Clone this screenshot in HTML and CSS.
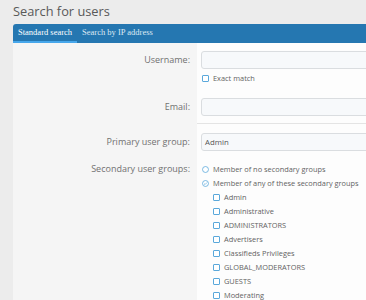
FILE: index.html
```html
<!DOCTYPE html>
<html lang="en">
<head>
    <meta charset="UTF-8">
    <meta name="viewport" content="width=device-width,initial-scale=1">
    <title>Search for users</title>
    <link rel="stylesheet" href="styles.css">
</head>
<body>
    <h1 class="page-title">Search for users</h1>
    <div class="block">
        <div class="tabs">
            <a class="tab is-active" href="#">Standard search</a>
            <a class="tab" href="#">Search by IP address</a>
        </div>
        <div class="block-body">
            <div class="section first">
                <div class="form-row">
                    <div class="row-label">Username:</div>
                    <div class="row-input">
                        <div class="input"></div>
                        <div class="option">
                            <span class="box"></span>Exact match
                        </div>
                    </div>
                </div>
                <div class="form-row">
                    <div class="row-label">Email:</div>
                    <div class="row-input">
                        <div class="input"></div>
                    </div>
                </div>
            </div>
            <div class="separator"></div>
            <div class="section">
                <div class="form-row">
                    <div class="row-label">Primary user group:</div>
                    <div class="row-input">
                        <div class="input">Admin</div>
                    </div>
                </div>
                <div class="form-row">
                    <div class="row-label short">Secondary user groups:</div>
                    <div class="row-input">
                        <div class="option">
                            <svg class="radio" viewBox="0 0 8 8"><circle cx="4" cy="4" r="3.4"/></svg>Member of no secondary groups
                        </div>
                        <div class="option">
                            <svg class="radio" viewBox="0 0 8 8"><circle cx="4" cy="4" r="3.4"/><polyline points="2.3,4.1 3.5,5.2 5.7,2.9"/></svg>Member of any of these secondary groups
                        </div>
                        <div class="group-list">
                            <div class="option"><span class="box"></span>Admin</div>
                            <div class="option"><span class="box"></span>Administrative</div>
                            <div class="option"><span class="box"></span>ADMINISTRATORS</div>
                            <div class="option"><span class="box"></span>Advertisers</div>
                            <div class="option"><span class="box"></span>Classifieds Privileges</div>
                            <div class="option"><span class="box"></span>GLOBAL_MODERATORS</div>
                            <div class="option"><span class="box"></span>GUESTS</div>
                            <div class="option"><span class="box"></span>Moderating</div>
                        </div>
                    </div>
                </div>
            </div>
        </div>
    </div>
</body>
</html>
```

FILE: styles.css
```css
html, body {
    overflow: hidden;
}
body {
    font-family: "Open Sans", Arial, sans-serif;
    background-color: #ececec;
    margin: 0;
    padding: 0 0 0 13px;
    color: #5a5a5a;
}
.page-title {
    font-size: 12.8px;
    font-weight: normal;
    line-height: 16px;
    margin: 3px 0 5px 0;
    color: #595959;
}
.block {
    width: 720px;
}
.tabs {
    display: flex;
    background: #2577b1;
    border-radius: 3px 3px 0 0;
}
.tab {
    font-family: "Liberation Serif", "Times New Roman", serif;
    font-size: 8.5px;
    line-height: 17px;
    height: 17px;
    padding: 0 5px;
    color: #dde9f3;
    text-decoration: none;
    border-bottom: 2px solid transparent;
}
.tab.is-active {
    color: #fff;
    border-bottom-color: #47a7eb;
}
.block-body {
    background: linear-gradient(to right, #f5f5f5 184px, #fdfdfd 184px);
}
.section {
    padding: 9px 0 0 0;
}
.section.first {
    padding: 8px 0 7px 0;
}
.separator {
    height: 1px;
    margin-left: 184px;
    background: #e4e4e4;
}
.form-row {
    display: flex;
    align-items: flex-start;
}
.section .form-row + .form-row {
    margin-top: 11px;
}
.section.first .form-row + .form-row {
    margin-top: 13px;
}
.row-label {
    width: 177px;
    padding-right: 7px;
    text-align: right;
    font-size: 9px;
    line-height: 18px;
    color: #717171;
}
.row-label.short {
    line-height: 14px;
}
.row-input {
    flex: 1;
    padding-left: 4px;
}
.input {
    box-sizing: border-box;
    height: 18px;
    border: 1px solid #dadde0;
    border-radius: 3px;
    background: #f7f9fb;
    padding: 0 3px;
    font-size: 7.8px;
    line-height: 16px;
    color: #555;
}
.input + .option {
    margin-top: 2px;
}
.option {
    display: flex;
    align-items: center;
    height: 14px;
    font-size: 7.4px;
    color: #636363;
    white-space: nowrap;
}
.box {
    box-sizing: border-box;
    width: 7px;
    height: 7px;
    margin: 0 4px 0 1px;
    border: 1px solid #5aa8db;
    border-radius: 1px;
    background: #fff;
}
.radio {
    width: 7px;
    height: 7px;
    margin: 0 4px 0 1px;
    fill: #fff;
    stroke: #5aa8db;
    stroke-width: 0.9;
}
.radio polyline {
    fill: none;
    stroke-width: 0.8;
}
.group-list {
    padding-left: 11px;
}
```
